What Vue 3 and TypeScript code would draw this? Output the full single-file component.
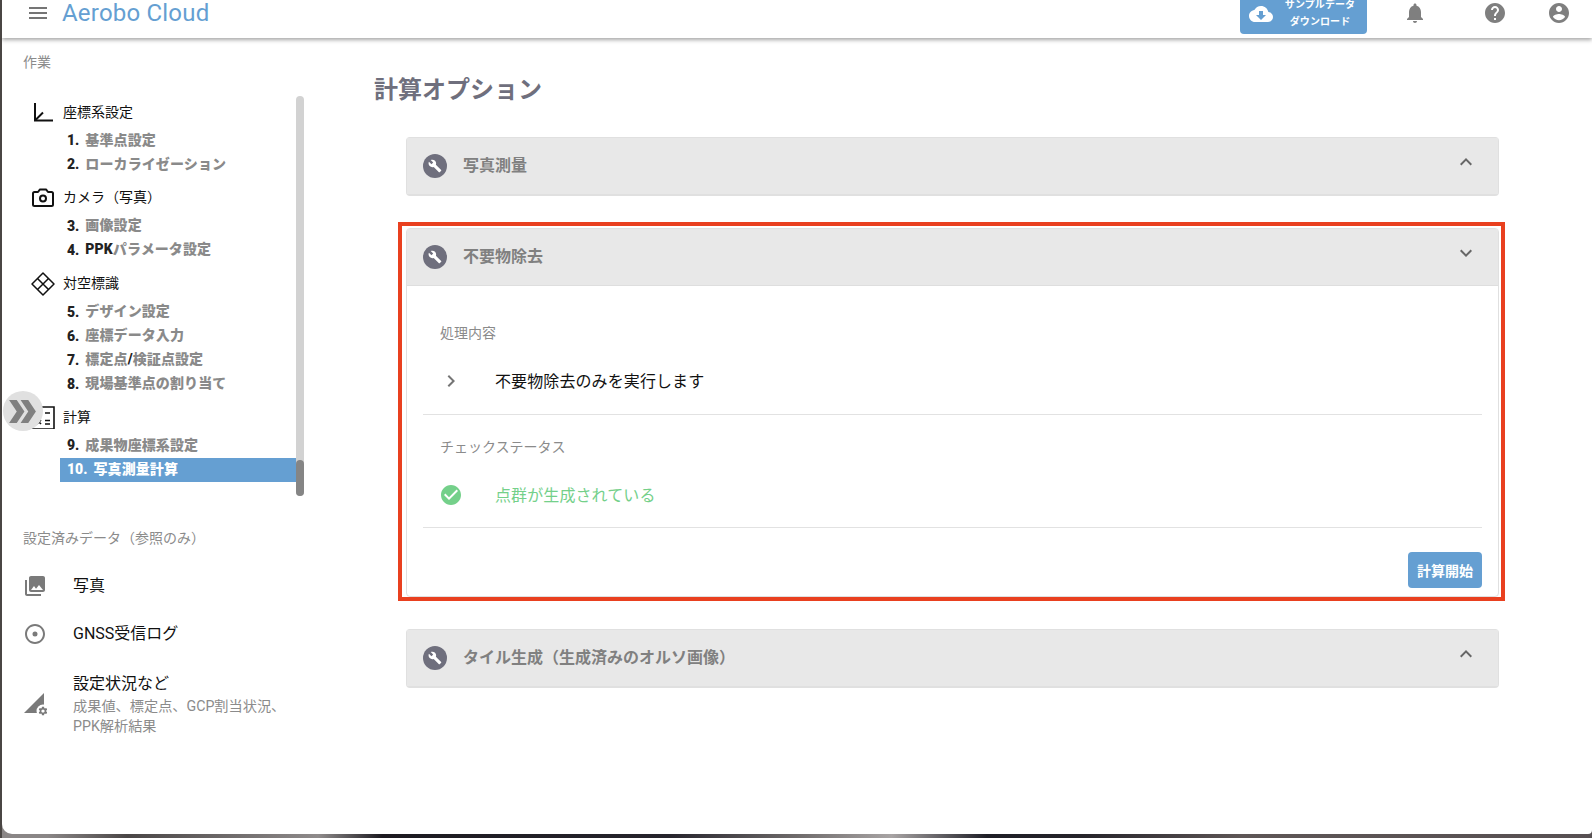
<script setup lang="ts">
interface Step { num: string; parts: { t: string; dark?: boolean }[]; active?: boolean }
interface Group { title: string; icon: string; steps: Step[] }

const groups: Group[] = [
  { title: '座標系設定', icon: 'axis', steps: [
    { num: '1.', parts: [{ t: '基準点設定' }] },
    { num: '2.', parts: [{ t: 'ローカライゼーション' }] },
  ] },
  { title: 'カメラ（写真）', icon: 'camera', steps: [
    { num: '3.', parts: [{ t: '画像設定' }] },
    { num: '4.', parts: [{ t: 'PPK', dark: true }, { t: 'パラメータ設定' }] },
  ] },
  { title: '対空標識', icon: 'target', steps: [
    { num: '5.', parts: [{ t: 'デザイン設定' }] },
    { num: '6.', parts: [{ t: '座標データ入力' }] },
    { num: '7.', parts: [{ t: '標定点' }, { t: '/', dark: true }, { t: '検証点設定' }] },
    { num: '8.', parts: [{ t: '現場基準点の割り当て' }] },
  ] },
  { title: '計算', icon: 'calc', steps: [
    { num: '9.', parts: [{ t: '成果物座標系設定' }] },
    { num: '10.', parts: [{ t: '写真測量計算' }], active: true },
  ] },
]

const wrench = 'M22.7 19l-9.1-9.1c.9-2.3.4-5-1.5-6.9-2-2-5-2.4-7.4-1.3L9 6 6 9 1.6 4.7C.4 7.1.9 10.1 2.9 12.1c1.9 1.9 4.6 2.4 6.9 1.5l9.1 9.1c.4.4 1 .4 1.4 0l2.3-2.3c.5-.4.5-1.1.1-1.4z'
const expandLess = 'M12 8l-6 6 1.41 1.41L12 10.83l4.59 4.58L18 14z'
const expandMore = 'M16.59 8.59L12 13.17 7.41 8.59 6 10l6 6 6-6z'
const gear = 'M19.14 12.94c.04-.3.06-.61.06-.94 0-.32-.02-.64-.07-.94l2.03-1.58c.18-.14.23-.41.12-.61l-1.92-3.32c-.12-.22-.37-.29-.59-.22l-2.39.96c-.5-.38-1.03-.7-1.62-.94l-.36-2.54c-.04-.24-.24-.41-.48-.41h-3.84c-.24 0-.43.17-.47.41l-.36 2.54c-.59.24-1.13.57-1.62.94l-2.39-.96c-.22-.08-.47 0-.59.22L2.74 8.87c-.12.21-.08.47.12.61l2.03 1.58c-.05.3-.09.63-.09.94s.02.64.07.94l-2.03 1.58c-.18.14-.23.41-.12.61l1.92 3.32c.12.22.37.29.59.22l2.39-.96c.5.38 1.03.7 1.62.94l.36 2.54c.05.24.24.41.48.41h3.84c.24 0 .44-.17.47-.41l.36-2.54c.59-.24 1.13-.56 1.62-.94l2.39.96c.22.08.47 0 .59-.22l1.92-3.32c.12-.22.07-.47-.12-.61l-2.01-1.58zM12 15.6c-1.98 0-3.6-1.62-3.6-3.6s1.62-3.6 3.6-3.6 3.6 1.62 3.6 3.6-1.62 3.6-3.6 3.6z'
</script>

<template>
  <div class="screen">
    <div class="panel">
      <header class="topbar">
        <svg class="menu" viewBox="0 0 24 24"><path d="M3 18h18v-2H3v2zm0-5h18v-2H3v2zm0-7v2h18V6H3z" /></svg>
        <div class="logo">Aerobo Cloud</div>
        <div class="spacer"></div>
        <button class="download">
          <svg class="cloud" viewBox="0 0 24 24"><path d="M19.35 10.04C18.67 6.59 15.64 4 12 4 9.11 4 6.6 5.64 5.35 8.04 2.34 8.36 0 10.91 0 14c0 3.31 2.69 6 6 6h13c2.76 0 5-2.24 5-5 0-2.64-2.05-4.78-4.65-4.96zM17 13l-5 5-5-5h3V9h4v4h3z" /></svg>
          <span class="download-text"><span>サンプルデータ</span><span>ダウンロード</span></span>
        </button>
        <svg class="top-icon bell" viewBox="0 0 24 24"><path d="M12 22c1.1 0 2-.9 2-2h-4c0 1.1.89 2 2 2zm6-6v-5c0-3.07-1.64-5.64-4.5-6.32V4c0-.83-.67-1.5-1.5-1.5s-1.5.67-1.5 1.5v.68C7.63 5.36 6 7.92 6 11v5l-2 2v1h16v-1l-2-2z" /></svg>
        <svg class="top-icon help" viewBox="0 0 24 24"><path d="M12 2C6.48 2 2 6.48 2 12s4.48 10 10 10 10-4.48 10-10S17.52 2 12 2zm1 17h-2v-2h2v2zm2.07-7.75l-.9.92C13.45 12.9 13 13.5 13 15h-2v-.5c0-1.1.45-2.1 1.17-2.83l1.24-1.26c.37-.36.59-.86.59-1.41 0-1.1-.9-2-2-2s-2 .9-2 2H8c0-2.21 1.79-4 4-4s4 1.79 4 4c0 .88-.36 1.68-.93 2.25z" /></svg>
        <svg class="top-icon account" viewBox="0 0 24 24"><path d="M12 2C6.48 2 2 6.48 2 12s4.48 10 10 10 10-4.48 10-10S17.52 2 12 2zm0 3c1.66 0 3 1.34 3 3s-1.34 3-3 3-3-1.34-3-3 1.34-3 3-3zm0 14.2c-2.5 0-4.71-1.28-6-3.22.03-1.99 4-3.08 6-3.08 1.99 0 5.97 1.09 6 3.08-1.29 1.94-3.5 3.22-6 3.22z" /></svg>
      </header>

      <div class="content">
        <aside class="sidebar">
          <div class="side-label">作業</div>
          <div class="tree-wrap">
            <div class="tree">
              <section v-for="g in groups" :key="g.title" class="group">
                <div class="group-head">
                  <svg class="group-icon" viewBox="0 0 24 24">
                    <g v-if="g.icon === 'axis'" fill="none" stroke="#111" stroke-width="2">
                      <path d="M4 3v17.5h18" />
                      <path d="M4.500 20L12 12.500" />
                    </g>
                    <g v-else-if="g.icon === 'camera'" fill="none" stroke="#111" stroke-width="2" stroke-linejoin="round">
                      <path d="M2 7.500a1.500 1.500 0 0 1 1.500-1.500H7l2-2.600h6L17 6h3.500A1.500 1.500 0 0 1 22 7.500v11a1.500 1.500 0 0 1-1.500 1.500h-17A1.500 1.500 0 0 1 2 18.500z" />
                      <circle cx="12" cy="12.500" r="3" />
                    </g>
                    <g v-else-if="g.icon === 'target'" fill="none" stroke="#111" stroke-width="1.500" stroke-linejoin="round">
                      <path d="M12 1l11 11-11 11L1 12z" />
                      <path d="M6.500 6.500l11 11M17.500 6.500l-11 11" />
                    </g>
                    <g v-else fill="none" stroke="#111" stroke-width="1.600">
                      <path d="M1.500 2H23v22H1.500z" />
                      <path d="M14 8h5M14 15.500h5M14 19h5M6 15l4 4M10 15l-4 4" />
                    </g>
                  </svg>
                  <span class="group-title">{{ g.title }}</span>
                </div>
                <div v-for="s in g.steps" :key="s.num" class="step" :class="{ active: s.active }">
                  <span class="num">{{ s.num }}</span>
                  <span class="step-text">
                    <span v-for="p in s.parts" :key="p.t" :class="{ dark: p.dark }">{{ p.t }}</span>
                  </span>
                </div>
              </section>
            </div>
            <div class="scrollbar"><div class="thumb"></div></div>
          </div>

          <div class="side-label second">設定済みデータ（参照のみ）</div>
          <div class="data-row">
            <svg class="data-icon" viewBox="0 0 24 24"><path d="M22 16V4c0-1.100-.9-2-2-2H8c-1.100 0-2 .9-2 2v12c0 1.100.9 2 2 2h12c1.100 0 2-.9 2-2zm-11-4l2.030 2.710L16 11l4 5H8l3-4zM2 6v14c0 1.100.9 2 2 2h14v-2H4V6H2z" /></svg>
            <span class="data-title">写真</span>
          </div>
          <div class="data-row">
            <svg class="data-icon" viewBox="0 0 24 24"><path d="M12 9.500a2.500 2.500 0 1 0 0 5 2.500 2.500 0 0 0 0-5zM12 2C6.480 2 2 6.480 2 12s4.480 10 10 10 10-4.480 10-10S17.520 2 12 2zm0 18c-4.420 0-8-3.580-8-8s3.580-8 8-8 8 3.580 8 8-3.580 8-8 8z" /></svg>
            <span class="data-title">GNSS受信ログ</span>
          </div>
          <div class="data-row tall">
            <svg class="data-icon" viewBox="0 0 24 24">
              <path d="M1 21L21 1v20z" />
              <circle cx="20" cy="19" r="6.500" fill="#fff" />
              <path :d="gear" transform="translate(14.600 13.600) scale(.45)" />
            </svg>
            <div>
              <div class="data-title">設定状況など</div>
              <div class="data-sub">成果値、標定点、GCP割当状況、<br />PPK解析結果</div>
            </div>
          </div>
        </aside>

        <main class="main">
          <h1 class="title">計算オプション</h1>

          <section class="acc first">
            <div class="acc-head">
              <svg class="badge" viewBox="0 0 24 24"><circle cx="12" cy="12" r="12" /><path class="wrench" :d="wrench" transform="translate(5 5) scale(.58)" /></svg>
              <span class="acc-title">写真測量</span>
              <svg class="chev" viewBox="0 0 24 24"><path :d="expandLess" /></svg>
            </div>
          </section>

          <section class="acc marked">
            <div class="acc-head open">
              <svg class="badge" viewBox="0 0 24 24"><circle cx="12" cy="12" r="12" /><path class="wrench" :d="wrench" transform="translate(5 5) scale(.58)" /></svg>
              <span class="acc-title">不要物除去</span>
              <svg class="chev" viewBox="0 0 24 24"><path :d="expandMore" /></svg>
            </div>
            <div class="acc-body">
              <div class="block one">
                <div class="block-label">処理内容</div>
                <div class="item">
                  <svg class="item-icon" viewBox="0 0 24 24"><path d="M10 6L8.590 7.410 13.170 12l-4.580 4.590L10 18l6-6z" /></svg>
                  <span class="item-text">不要物除去のみを実行します</span>
                </div>
              </div>
              <div class="block two">
                <div class="block-label">チェックステータス</div>
                <div class="item ok">
                  <svg class="item-icon" viewBox="0 0 24 24"><path d="M12 2C6.480 2 2 6.480 2 12s4.480 10 10 10 10-4.480 10-10S17.520 2 12 2zm-2 15l-5-5 1.410-1.410L10 14.170l7.590-7.590L19 8l-9 9z" /></svg>
                  <span class="item-text">点群が生成されている</span>
                </div>
              </div>
              <div class="actions"><button class="start">計算開始</button></div>
            </div>
          </section>

          <section class="acc last">
            <div class="acc-head">
              <svg class="badge" viewBox="0 0 24 24"><circle cx="12" cy="12" r="12" /><path class="wrench" :d="wrench" transform="translate(5 5) scale(.58)" /></svg>
              <span class="acc-title">タイル生成（生成済みのオルソ画像）</span>
              <svg class="chev" viewBox="0 0 24 24"><path :d="expandLess" /></svg>
            </div>
          </section>
        </main>
      </div>

      <button class="collapse" aria-label="開く">
        <svg viewBox="0 0 28 24"><path d="M0 0h8l8 12-8 12H0l8-12zM12 0h8l8 12-8 12h-8l8-12z" /></svg>
      </button>
    </div>
  </div>
</template>

<style>
html, body { margin: 0; overflow: hidden; }
</style>

<style scoped>
.screen {
  width: 1592px;
  height: 838px;
  overflow: hidden;
  font-family: Roboto, "Noto Sans CJK JP", sans-serif;
  background:
    linear-gradient(#4a4644, #4a4644) 0 0 / 2px 100% no-repeat,
    linear-gradient(90deg, #8a8686 0, #8a8686 3%, #4a4646 8%, #8f8b8b 20%, #1c1a20 24%, #26242c 42%, #6e6a6a 50%, #a8a4a4 56%, #1e1e26 62%, #26242a 68%, #5e5656 78%, #575052 100%);
}
.panel {
  position: relative;
  margin-left: 2px;
  width: 1590px;
  height: 834px;
  background: #fff;
  border-radius: 0 0 4px 10px;
  overflow: hidden;
}
.topbar {
  height: 38px;
  box-sizing: border-box;
  display: flex;
  align-items: flex-start;
  position: relative;
  z-index: 1;
  background: #fff;
  box-shadow: 0 2px 4px rgba(0, 0, 0, .35);
}
.menu { width: 24px; height: 24px; margin: 1px 0 0 24px; fill: #757575; }
.logo {
  margin-left: 12px;
  margin-top: -4px;
  font-size: 24px;
  line-height: 34px;
  letter-spacing: .2px;
  color: #659fd2;
}
.spacer { flex: 1; }
.download {
  width: 127px;
  height: 34px;
  padding: 0 0 0 9px;
  border: 0;
  border-radius: 0 0 4px 4px;
  background: #659fd2;
  color: #fff;
  display: flex;
  align-items: flex-start;
  font: inherit;
  overflow: hidden;
}
.cloud { width: 24px; height: 24px; margin-top: 2px; fill: #fff; flex: none; }
.download-text {
  margin: -4px 0 0 4px;
  width: 86px;
  display: flex;
  flex-direction: column;
  align-items: center;
  font-size: 10px;
  font-weight: 700;
  line-height: 17px;
  letter-spacing: .1px;
}
.top-icon { width: 24px; height: 24px; fill: #7f7f7f; margin-top: 1px; flex: none; }
.bell { margin-left: 36px; }
.help { margin-left: 56px; }
.account { margin-left: 40px; margin-right: 21px; }

.content { display: flex; height: 796px; }
.sidebar { width: 328px; flex: none; box-sizing: border-box; }
.side-label {
  padding: 14px 0 0 21px;
  font-size: 14px;
  line-height: 20px;
  color: #8b8b8b;
}
.tree-wrap { display: flex; width: 302px; margin-top: 24px; height: 400px; }
.tree { flex: 1; padding-top: 4px; }
.group { margin-bottom: 9.2px; }
.group-head {
  display: flex;
  align-items: center;
  height: 24px;
  margin-bottom: 4.6px;
  padding-left: 29px;
  font-size: 14px;
  color: #111;
}
.group-title { margin-bottom: 3px; }
.group-icon { width: 24px; height: 24px; margin-right: 8px; flex: none; }
.step {
  display: flex;
  align-items: center;
  height: 24px;
  margin-left: 58px;
  padding-left: 7px;
  font-size: 14px;
  font-weight: 900;
  color: #8a8a8a;
}
.step-text { letter-spacing: .1px; margin-bottom: 4px; }
.num { color: #222; font-weight: 900; margin-right: 6px; margin-bottom: 1px; }
.dark { color: #222; font-weight: 900; }
.step.active { background: #659fd2; color: #fff; }
.step.active .num { color: #fff; }
.scrollbar {
  width: 8px;
  border-radius: 4px;
  background: #d2d2d2;
  display: flex;
  flex-direction: column;
  justify-content: flex-end;
}
.thumb { height: 36px; border-radius: 4px; background: #858585; }
.side-label.second { padding-top: 32px; }
.side-label.second + .data-row { margin-top: 14px; }
.data-row {
  display: flex;
  align-items: center;
  min-height: 48px;
  padding-left: 21px;
  color: #111;
}
.data-row.tall { padding-top: 14px; padding-bottom: 14px; }
.data-icon { width: 24px; height: 24px; fill: #7a7a7a; flex: none; margin-right: 26px; }
.data-title { font-size: 16px; line-height: 24px; }
.data-sub { font-size: 14.2px; line-height: 20px; color: #8b8b8b; }

.main { flex: 1; padding: 35px 0 0 44px; }
.title {
  margin: 0;
  font-size: 24px;
  line-height: 34px;
  font-weight: 700;
  color: #6f6f7d;
}
.acc {
  position: relative;
  width: 1093px;
  margin-left: 32px;
  box-sizing: border-box;
  border: 1px solid #e0e0e0;
  border-bottom-width: 2px;
  border-radius: 4px;
  background: #fff;
}
.acc.first { margin-top: 30px; }
.acc.marked { margin-top: 32px; border-bottom-width: 1px; }
.acc.marked::after {
  content: "";
  position: absolute;
  top: -7px;
  left: -9px;
  right: -7px;
  bottom: -5px;
  border: 4px solid #e9401f;
  pointer-events: none;
}
.acc.last { margin-top: 32px; }
.acc-head {
  height: 56px;
  padding: 0 20px 0 16px;
  display: flex;
  align-items: center;
  background: #e8e8e8;
}
.acc-head.open { height: 56px; border-bottom: 1px solid #dedede; }
.badge { width: 24px; height: 24px; fill: #6f6f7d; flex: none; margin-right: 16px; }
.wrench { fill: #fff; }
.acc-title { flex: 1; font-size: 16px; font-weight: 700; color: #808080; margin-bottom: 4px; }
.chev { width: 24px; height: 24px; fill: #666; flex: none; align-self: flex-start; margin-top: 12px; }
.acc-body { padding: 0 16px 8px; }
.block { border-bottom: 1px solid #e2e2e2; }
.block.one { padding-top: 37px; padding-bottom: 9px; }
.block.two { padding-top: 22px; padding-bottom: 8px; }
.block-label {
  padding-left: 17px;
  font-size: 14px;
  line-height: 20px;
  color: #8b8b8b;
}
.item {
  display: flex;
  align-items: center;
  height: 48px;
  padding-left: 16px;
  margin-top: 14px;
  font-size: 16px;
  color: #111;
}
.item-text { letter-spacing: .1px; margin-bottom: 3px; }
.item-icon { width: 24px; height: 24px; fill: #757575; flex: none; margin-right: 32px; }
.item.ok { color: #74d08a; }
.item.ok .item-icon { fill: #74d08a; }
.actions { display: flex; justify-content: flex-end; margin-top: 24px; }
.start {
  width: 74px;
  height: 36px;
  border: 0;
  border-radius: 4px;
  background: #659fd2;
  color: #fff;
  font: inherit;
  font-size: 14px;
  font-weight: 700;
}
.collapse {
  position: absolute;
  left: 1px;
  top: 391px;
  width: 40px;
  height: 40px;
  padding: 0;
  border: 0;
  border-radius: 50%;
  background: #e0e0e0;
  display: flex;
  align-items: center;
  justify-content: center;
}
.collapse svg { width: 27px; height: 23px; margin-right: 2px; fill: #808080; }
</style>
